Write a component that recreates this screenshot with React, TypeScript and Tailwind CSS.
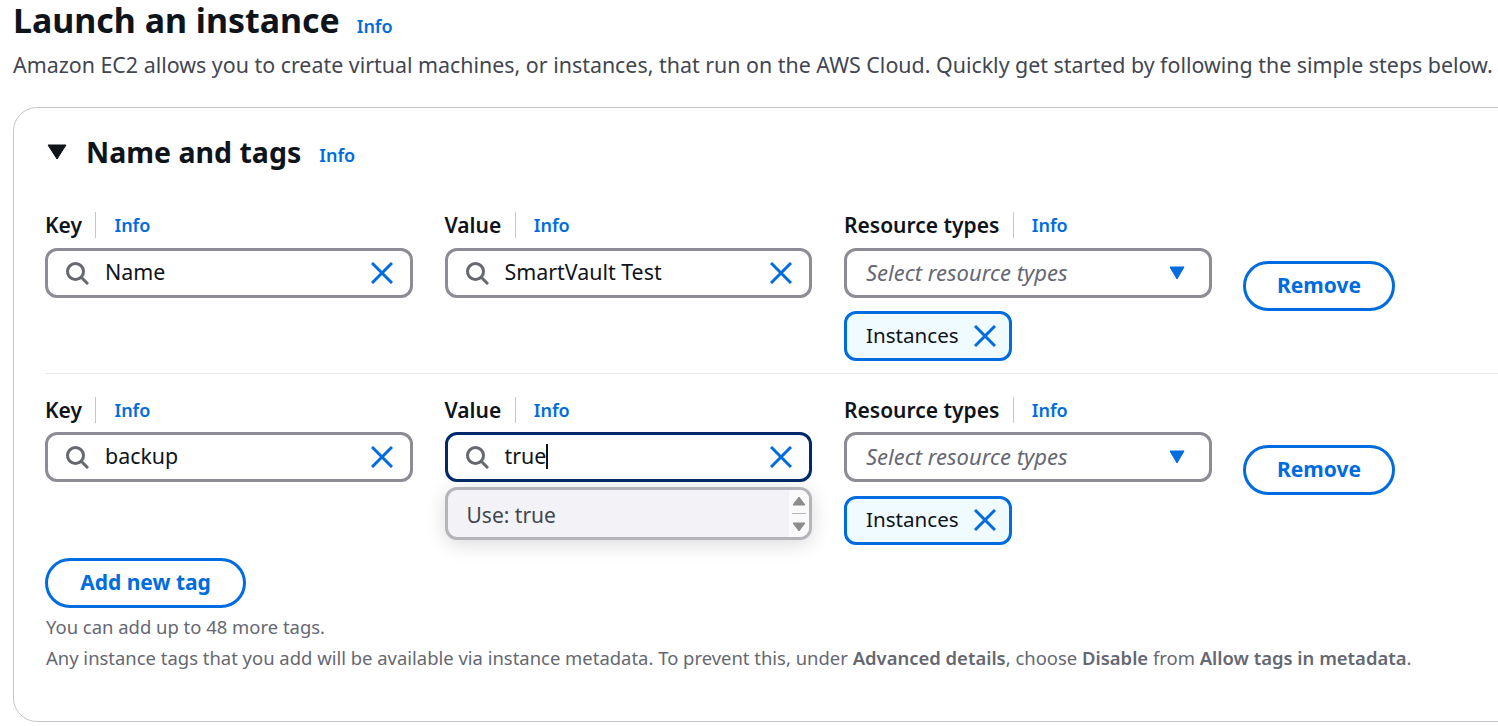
import React from 'react';

const font = '[font-family:"Noto_Sans",sans-serif]';

function Search() {
    return (
        <svg width="24" height="24" viewBox="0 0 24 24" fill="none" stroke="#656871" strokeWidth="3" className="shrink-0">
            <circle cx="10.5" cy="10.5" r="8" />
            <path d="M16.5 16.5 L23 23" />
        </svg>
    );
}

function Cross({ size = 22 }: { size?: number }) {
    return (
        <svg width={size} height={size} viewBox="0 0 22 22" fill="none" stroke="#006ce0" strokeWidth="3" className="shrink-0">
            <path d="M1 1 L21 21 M21 1 L1 21" />
        </svg>
    );
}

function Label({ text }: { text: string }) {
    return (
        <div className="flex items-center h-[26px]">
            <span className="text-[21px] leading-[26px] font-semibold text-[#0f141a]">{text}</span>
            <span className="ml-[13.5px] w-px h-[26px] bg-[#c6c6cd]" />
            <span className="ml-[18px] text-[18px] leading-[26px] font-semibold text-[#006ce0]">Info</span>
        </div>
    );
}

function SearchField({ value, focused, second, children }: { value: string; focused?: boolean; second?: boolean; children?: React.ReactNode }) {
    return (
        <div className="relative w-[367.5px]">
            <Label text={value === 'Name' || value === 'backup' ? 'Key' : 'Value'} />
            <div
                className={`${second ? 'mt-[9px]' : 'mt-[10px]'} flex items-center h-[49.5px] pl-[17px] pr-[17px] bg-white rounded-[12px] border-[3px] ${
                    focused ? 'border-[#002a6b]' : 'border-[#8c8c94]'
                }`}
            >
                <Search />
                <span className="ml-[16px] pb-px flex-1 flex items-center text-[21.4px] text-[#0f141a]">
                    {value}
                    {focused && <span className="w-[2px] h-[25px] bg-[#0f141a]" />}
                </span>
                <Cross />
            </div>
            {children}
        </div>
    );
}

function ResourceField({ second }: { second?: boolean }) {
    return (
        <div className="w-[368px]">
            <Label text="Resource types" />
            <div className={`${second ? 'mt-[9px]' : 'mt-[10px]'} flex items-center h-[49.5px] pl-[19px] pr-[24px] bg-white rounded-[12px] border-[3px] border-[#8c8c94]`}>
                <span className="flex-1 text-[22px] italic text-[#656871]">Select resource types</span>
                <svg width="16" height="14" viewBox="0 0 16 14" fill="#006ce0" className="shrink-0">
                    <path d="M1 1 H15 L8 13 Z" stroke="#006ce0" strokeLinejoin="round" />
                </svg>
            </div>
            <div className={`${second ? 'mt-[14px]' : 'mt-[13.5px]'} flex items-center w-fit h-[49.5px] pl-[19px] pr-[13px] rounded-[12px] border-[3px] border-[#006ce0] bg-[#f0fbff]`}>
                <span className="pb-px text-[20.6px] text-[#0f141a]">Instances</span>
                <span className="ml-[15px]">
                    <Cross />
                </span>
            </div>
        </div>
    );
}

function PillButton({ text, className }: { text: string; className: string }) {
    return (
        <div className={`flex items-center justify-center h-[50px] rounded-full border-[3px] border-[#006ce0] text-[21px] font-bold text-[#006ce0] ${className}`}>
            {text}
        </div>
    );
}

function TagRow({ keyName, value, focused, second, children }: { keyName: string; value: string; focused?: boolean; second?: boolean; children?: React.ReactNode }) {
    return (
        <div className="flex items-start gap-[32px]">
            <SearchField value={keyName} second={second} />
            <SearchField value={value} focused={focused} second={second}>
                {children}
            </SearchField>
            <ResourceField second={second} />
            <PillButton text="Remove" className={`w-[152px] -ml-px ${second ? 'mt-[48px]' : 'mt-[49px]'}`} />
        </div>
    );
}

export default function App() {
    return (
        <div className={`w-[1498px] h-[726px] overflow-hidden bg-white pl-[13px] ${font}`}>
            <div className="flex items-baseline h-[42px]">
                <h1 className="text-[33.9px] leading-[40px] font-bold text-[#0f141a]">Launch an instance</h1>
                <span className="ml-[17px] text-[18px] font-semibold text-[#006ce0]">Info</span>
            </div>
            <p className="mt-[9px] text-[21.4px] leading-[28px] text-[#424650] whitespace-nowrap">
                Amazon EC2 allows you to create virtual machines, or instances, that run on the AWS Cloud. Quickly get started by following the simple steps below.
            </p>

            <section className="mt-[28px] w-[1520px] h-[615px] rounded-[24px] border border-[#c6c6cd] pl-[31px] pt-[24px]">
                <div className="flex items-center h-[40px]">
                    <svg width="20" height="16" viewBox="0 0 20 16" fill="#0f141a" className="ml-[2px]">
                        <path d="M1 1 H19 L10 15 Z" stroke="#0f141a" strokeLinejoin="round" />
                    </svg>
                    <h2 className="ml-[19px] text-[28.5px] leading-[40px] font-bold text-[#0f141a]">Name and tags</h2>
                    <span className="ml-[18px] mt-[6px] text-[18px] font-semibold text-[#006ce0]">Info</span>
                </div>

                <div className="mt-[40px] pb-[12.5px] border-b border-[#e8e8ec]">
                    <TagRow keyName="Name" value="SmartVault Test" />
                </div>

                <div className="mt-[23px]">
                    <TagRow keyName="backup" value="true" focused second>
                        <div className="absolute left-0 top-[90px] w-[367px] h-[53px] rounded-[12px] border-[3px] border-[#b4b4bb] bg-[#f3f3f7] shadow-[0_4px_20px_rgba(0,7,22,0.15)] overflow-hidden flex">
                            <span className="flex-1 pl-[19px] text-[21px] leading-[50px] text-[#424650]">Use: true</span>
                            <div className="w-[20px] bg-[#fafafa] flex flex-col items-center pt-[6px]">
                                <svg width="14" height="10" viewBox="0 0 14 10" fill="#8c8c8c" stroke="#8c8c8c" strokeLinejoin="round">
                                    <path d="M7 1 L13 9 H1 Z" />
                                </svg>
                                <span className="mt-[7px] w-[14px] h-px bg-[#b4b4bb]" />
                                <svg width="14" height="10" viewBox="0 0 14 10" fill="#8c8c8c" stroke="#8c8c8c" strokeLinejoin="round" className="mt-[8px]">
                                    <path d="M1 1 H13 L7 9 Z" />
                                </svg>
                            </div>
                        </div>
                    </TagRow>
                </div>

                <PillButton text="Add new tag" className="w-[201px] mt-[13px]" />
                <p className="mt-[6px] ml-px text-[18.45px] leading-[26px] text-[#656871]">You can add up to 48 more tags.</p>
                <p className="mt-[5px] ml-px text-[18.45px] leading-[26px] text-[#656871] whitespace-nowrap">
                    Any instance tags that you add will be available via instance metadata. To prevent this, under <b className="font-semibold">Advanced details</b>, choose <b className="font-semibold">Disable</b> from <b className="font-semibold">Allow tags in metadata</b>.
                </p>
            </section>
        </div>
    );
}
